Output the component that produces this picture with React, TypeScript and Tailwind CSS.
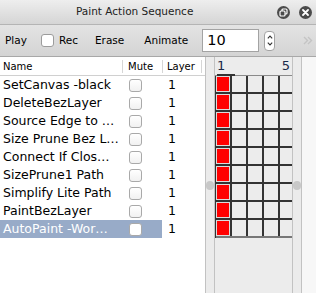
import React from 'react';

const actions = [
  'SetCanvas -black',
  'DeleteBezLayer',
  'Source Edge to …',
  'Size Prune Bez L…',
  'Connect If Clos…',
  'SizePrune1 Path',
  'Simplify Lite Path',
  'PaintBezLayer',
  'AutoPaint -Wor…',
];

const selected = 8;

const Check: React.FC<{ white?: boolean }> = ({ white }) => (
  <div
    className={`h-[13px] w-[13px] rounded-[3px] border border-[#a9a9a9] ${
      white ? 'bg-white' : 'bg-gradient-to-b from-white to-[#f1f1f1]'
    }`}
  />
);

const Grip: React.FC = () => (
  <div className="h-[9px] w-[9px] rounded-full bg-[#c8c8c8]" />
);

const App: React.FC = () => {
  return (
    <div className="flex h-[293px] w-[316px] flex-col overflow-hidden bg-[#ececec] font-['DejaVu_Sans',sans-serif] text-black">
      {/* Title bar */}
      <div className="relative flex h-[25px] shrink-0 items-center border-b border-[#b4b4b4] bg-gradient-to-b from-[#eeeeee] to-[#d5d5d5]">
        <span className="ml-[76px] text-[10.5px] text-[#222]">Paint Action Sequence</span>
        <div className="ml-auto mr-[4px] flex items-center gap-[9px]">
          <div className="flex h-[13px] w-[13px] items-center justify-center rounded-full bg-[#4b4b4b]">
            <svg width="9" height="9" viewBox="0 0 9 9">
              <rect x="3" y="1" width="5" height="5" rx="1" fill="none" stroke="white" strokeWidth="1.2" />
              <rect x="1" y="3" width="5" height="5" rx="1" fill="#4b4b4b" stroke="white" strokeWidth="1.2" />
            </svg>
          </div>
          <div className="flex h-[13px] w-[13px] items-center justify-center rounded-full bg-[#4b4b4b]">
            <svg width="7" height="7" viewBox="0 0 7 7">
              <path d="M1 1L6 6M6 1L1 6" stroke="white" strokeWidth="1.8" strokeLinecap="round" />
            </svg>
          </div>
        </div>
      </div>

      {/* Toolbar */}
      <div className="flex h-[32px] shrink-0 items-center border-b border-[#a8a8a8] bg-gradient-to-b from-[#e3e3e3] to-[#d4d4d4] text-[10.5px]">
        <span className="ml-[5px]">Play</span>
        <div className="ml-[14px] h-[13px] w-[13px] rounded-[3px] border border-[#9c9c9c] bg-white" />
        <span className="ml-[5px]">Rec</span>
        <span className="ml-[17px]">Erase</span>
        <span className="ml-[20px]">Animate</span>
        <div className="ml-[14px] flex h-[23px] w-[57px] items-center border border-[#a3a3a3] bg-white pl-[4px] text-[14.5px] leading-none">
          10
        </div>
        <div className="ml-[5px] flex h-[20px] w-[11px] flex-col items-center justify-center gap-[3px] rounded-[4px] border border-[#a3a3a3] bg-white">
          <svg width="6" height="4" viewBox="0 0 6 4">
            <path d="M0.8 3.3L3 1L5.2 3.3" fill="none" stroke="#333" strokeWidth="1.1" />
          </svg>
          <svg width="6" height="4" viewBox="0 0 6 4">
            <path d="M0.8 0.7L3 3L5.2 0.7" fill="none" stroke="#333" strokeWidth="1.1" />
          </svg>
        </div>
        <svg className="ml-auto mr-[3px]" width="10" height="9" viewBox="0 0 10 9">
          <path d="M1 1L4.5 4.5L1 8M5 1L8.5 4.5L5 8" fill="none" stroke="#c4c4c4" strokeWidth="1.4" />
        </svg>
      </div>

      {/* Content */}
      <div className="flex min-h-0 flex-1">
        {/* Action list */}
        <div className="flex w-[205px] shrink-0 flex-col bg-white">
          <div className="flex h-[19px] shrink-0 items-center border-b border-[#d0d0d0] text-[10px]">
            <div className="w-[122px] pl-[3px]">Name</div>
            <div className="h-[13px] w-px bg-[#d6d6d6]" />
            <div className="w-[39px] pl-[5px]">Mute</div>
            <div className="h-[13px] w-px bg-[#d6d6d6]" />
            <div className="w-[38px] pl-[4px]">Layer</div>
            <div className="h-[13px] w-px bg-[#d6d6d6]" />
          </div>
          {actions.map((name, i) => {
            const sel = i === selected;
            return (
              <div key={name} className="flex h-[18px] items-center text-[12.5px] leading-none">
                <div
                  className={`flex h-full w-[162px] items-center ${
                    sel ? 'bg-[#98abc8] text-white' : ''
                  }`}
                >
                  <div className="w-[129px] whitespace-nowrap pl-[3px]">{name}</div>
                  <Check white={sel} />
                </div>
                <div className="pl-[6px]">1</div>
              </div>
            );
          })}
        </div>

        {/* Splitter */}
        <div className="flex w-[10px] shrink-0 items-start justify-center border-x border-[#c2c2c2] bg-[#ebebeb] pt-[124px]">
          <Grip />
        </div>

        {/* Timeline grid */}
        <div className="flex w-[77px] shrink-0 flex-col bg-[#ececec]">
          <div className="flex h-[19px] shrink-0 items-start justify-between border-b border-[#8a8a8a] px-[2px] text-[13px] leading-[17px] text-[#1a2a4a]">
            <span className="border-b-2 border-[#333] pr-[10px]">1</span>
            <span>5</span>
          </div>
          <div className="w-fit border-l border-[#333]">
            {actions.map((name, r) => (
              <div
                key={name}
                className={`flex h-[18px] border-b-2 ${r === actions.length - 1 ? 'border-[#777]' : 'border-[#333]'}`}
              >
                {[0, 1, 2, 3, 4].map((c) => (
                  <div
                    key={c}
                    className={`h-[16px] ${c === 4 ? 'w-[12px]' : 'w-[16px] border-r-2 border-[#333]'}`}
                  >
                    {c === 0 && <div className="h-full w-full border border-[#dcdcdc] bg-[#ff0000]" />}
                  </div>
                ))}
              </div>
            ))}
          </div>
        </div>

        {/* Splitter */}
        <div className="flex w-[10px] shrink-0 items-start justify-center border-x border-[#c2c2c2] bg-[#ebebeb] pt-[124px]">
          <Grip />
        </div>

        <div className="flex-1 bg-[#f7f7f7]" />
      </div>
    </div>
  );
};

export default App;
